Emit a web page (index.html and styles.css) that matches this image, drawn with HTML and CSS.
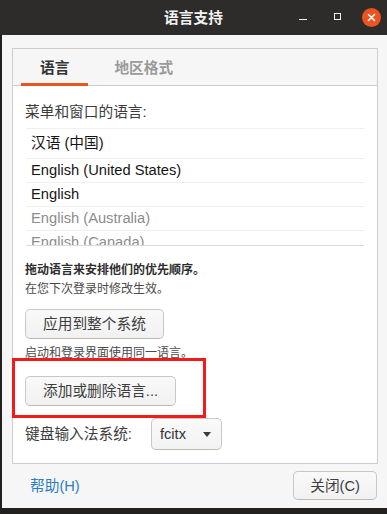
FILE: index.html
```html
<!DOCTYPE html>
<html lang="zh-CN">
<head>
<meta charset="utf-8">
<title>语言支持</title>
<link rel="stylesheet" href="styles.css">
</head>
<body>
<div class="screen">
  <header class="titlebar">
    <div class="title">语言支持</div>
    <div class="wm">
      <span class="wm-min"></span>
      <span class="wm-max"></span>
      <span class="wm-close">
        <svg width="19" height="19" viewBox="0 0 19 19">
          <circle cx="9.5" cy="9.5" r="9.5" fill="#e95420"/>
          <path d="M6.5 6.5 L12.5 12.5 M12.5 6.5 L6.5 12.5" stroke="#ffffff" stroke-width="1.6" stroke-linecap="round"/>
        </svg>
      </span>
    </div>
  </header>
  <div class="window">
    <div class="notebook">
      <div class="tabs">
        <div class="tab active">语言</div>
        <div class="tab">地区格式</div>
      </div>
      <div class="page">
        <div class="label">菜单和窗口的语言:</div>
        <div class="list">
          <div class="row first">汉语 (中国)</div>
          <div class="row">English (United States)</div>
          <div class="row">English</div>
          <div class="row muted">English (Australia)</div>
          <div class="row muted">English (Canada)</div>
        </div>
        <div class="hint strong">拖动语言来安排他们的优先顺序。</div>
        <div class="hint">在您下次登录时修改生效。</div>
        <button class="btn btn-apply">应用到整个系统</button>
        <div class="hint hint-login">启动和登录界面使用同一语言。</div>
        <button class="btn btn-add">添加或删除语言...</button>
        <div class="im-row">
          <span class="im-label">键盘输入法系统:</span>
          <div class="combo"><span>fcitx</span><span class="arrow"></span></div>
        </div>
      </div>
    </div>
    <div class="footer">
      <a class="link">帮助(H)</a>
      <button class="btn btn-close">关闭(C)</button>
    </div>
  </div>
  <div class="annot"></div>
</div>
</body>
</html>
```

FILE: styles.css
```css
html, body {
  margin: 0;
  padding: 0;
}
body {
  background: #232120;
  font-family: "Liberation Sans", "Noto Sans CJK SC", sans-serif;
  font-size: 14.7px;
  color: #3c3c3c;
}
.screen {
  position: relative;
  width: 387px;
  height: 514px;
  overflow: hidden;
}
.titlebar {
  height: 35px;
  background: #2e2c2b;
  display: grid;
  grid-template-columns: 1fr auto 1fr;
  align-items: center;
}
.title {
  grid-column: 2;
  color: #f2f2f2;
  font-weight: bold;
  font-size: 14.7px;
  line-height: 20px;
  padding-top: 1px;
}
.wm {
  grid-column: 3;
  justify-self: end;
  display: flex;
  align-items: center;
  padding-right: 6px;
}
.wm-min {
  width: 8px;
  height: 1.5px;
  background: #f2f2f2;
  margin-top: 4px;
}
.wm-max {
  width: 5px;
  height: 5px;
  border: 1.5px solid #f2f2f2;
  margin-left: 27px;
  margin-top: -2px;
}
.wm-close {
  display: flex;
  margin-left: 21px;
  margin-top: -1px;
}
.window {
  margin-left: 2px;
  height: 473px;
  background: #f6f6f6;
  padding: 13px 9px 0 10px;
  box-sizing: border-box;
}
.notebook {
  height: 416px;
  box-sizing: border-box;
  border: 1px solid #cdcdcd;
  display: flex;
  flex-direction: column;
}
.tabs {
  height: 37px;
  box-sizing: border-box;
  border-bottom: 1px solid #cdcdcd;
  display: flex;
  background: #f6f6f6;
}
.tab {
  height: 37px;
  box-sizing: border-box;
  margin-bottom: -1px;
  padding: 9px 19px 0;
  line-height: 20px;
  border-bottom: 3px solid transparent;
  font-weight: bold;
  color: #9a9a9a;
  margin-left: 7px;
}
.tab.active {
  margin-left: 8px;
  color: #333333;
  border-bottom-color: #e95420;
}
.page {
  flex: 1;
  background: #ffffff;
  padding: 16px 13px 0 12px;
  display: flex;
  flex-direction: column;
  align-items: flex-start;
}
.label {
  line-height: 20px;
  color: #3c3c3c;
}
.list {
  align-self: stretch;
  margin-top: 6px;
  margin-left: 1px;
  height: 118px;
  box-sizing: border-box;
  border-top: 1px solid #efefef;
  border-bottom: 1px solid #dadada;
  overflow: hidden;
}
.row {
  height: 24px;
  box-sizing: border-box;
  border-top: 1px solid #efefef;
  line-height: 22px;
  padding-left: 5px;
  color: #151515;
  white-space: nowrap;
}
.row.first {
  height: 29px;
  border-top: 0;
  line-height: 28px;
}
.row.muted {
  color: #8c8c8c;
}
.hint {
  font-size: 12px;
  line-height: 19px;
  color: #4a4a4a;
}
.hint.strong {
  margin-top: 15px;
  font-weight: bold;
  color: #2e2e2e;
}
.btn {
  font-family: inherit;
  font-size: 14.7px;
  color: #3d3d3d;
  height: 30px;
  padding: 0 17px;
  border: 1px solid #cdc7c2;
  border-bottom-color: #bfb8b1;
  border-radius: 5px;
  background: linear-gradient(#f9f9f9, #f1f1f1);
  line-height: 20px;
}
.btn-apply {
  margin-top: 10px;
}
.hint.hint-login {
  margin-top: 5px;
}
.btn-add {
  margin-top: 13px;
}
.im-row {
  margin-top: 12px;
  display: flex;
  align-items: center;
  gap: 19px;
}
.im-label {
  line-height: 20px;
  color: #3c3c3c;
}
.combo {
  width: 71px;
  height: 32px;
  box-sizing: border-box;
  border: 1px solid #cdc7c2;
  border-bottom-color: #bfb8b1;
  border-radius: 5px;
  background: linear-gradient(#fafafa, #f2f2f2);
  display: flex;
  align-items: center;
  justify-content: space-between;
  padding: 0 10px 0 8px;
  color: #333333;
}
.arrow {
  width: 0;
  height: 0;
  border-left: 4px solid transparent;
  border-right: 4px solid transparent;
  border-top: 5px solid #3a3a3a;
}
.footer {
  margin-top: 7px;
  display: flex;
  justify-content: space-between;
  align-items: center;
  padding-right: 1px;
}
.link {
  margin-left: 18px;
  color: #2b7fc3;
  line-height: 20px;
}
.btn-close {
  height: 29px;
  padding: 0 16px;
}
.annot {
  position: absolute;
  left: 12px;
  top: 358px;
  width: 194px;
  height: 60px;
  box-sizing: border-box;
  border: 3px solid #f21b1b;
}
```
